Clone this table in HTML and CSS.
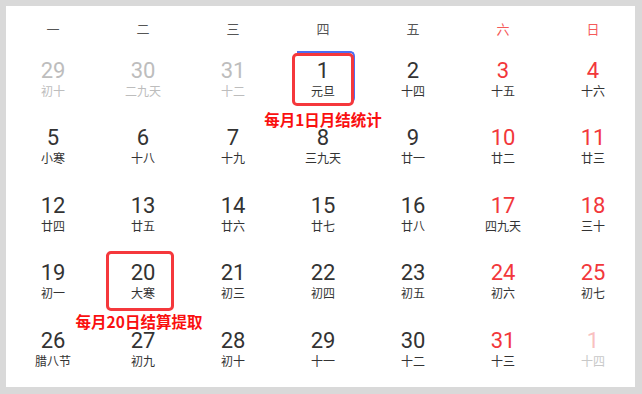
FILE: index.html
```html
<!DOCTYPE html>
<html lang="zh">
<head>
<meta charset="utf-8">
<link rel="stylesheet" href="styles.css">
</head>
<body>
<div class="panel">
  <div class="cal">
    <div class="wk">一</div><div class="wk">二</div><div class="wk">三</div><div class="wk">四</div><div class="wk">五</div><div class="wk we">六</div><div class="wk we">日</div>

    <div class="cell other"><div class="num">29</div><div class="lunar">初十</div></div>
    <div class="cell other"><div class="num">30</div><div class="lunar">二九天</div></div>
    <div class="cell other"><div class="num">31</div><div class="lunar">十二</div></div>
    <div class="cell"><span class="sel"></span><span class="mark mark-1"></span><div class="num">1</div><div class="lunar">元旦</div><span class="note note-1">每月1日月结统计</span></div>
    <div class="cell"><div class="num">2</div><div class="lunar">十四</div></div>
    <div class="cell red"><div class="num">3</div><div class="lunar">十五</div></div>
    <div class="cell red"><div class="num">4</div><div class="lunar">十六</div></div>

    <div class="cell"><div class="num">5</div><div class="lunar">小寒</div></div>
    <div class="cell"><div class="num">6</div><div class="lunar">十八</div></div>
    <div class="cell"><div class="num">7</div><div class="lunar">十九</div></div>
    <div class="cell"><div class="num">8</div><div class="lunar">三九天</div></div>
    <div class="cell"><div class="num">9</div><div class="lunar">廿一</div></div>
    <div class="cell red"><div class="num">10</div><div class="lunar">廿二</div></div>
    <div class="cell red"><div class="num">11</div><div class="lunar">廿三</div></div>

    <div class="cell"><div class="num">12</div><div class="lunar">廿四</div></div>
    <div class="cell"><div class="num">13</div><div class="lunar">廿五</div></div>
    <div class="cell"><div class="num">14</div><div class="lunar">廿六</div></div>
    <div class="cell"><div class="num">15</div><div class="lunar">廿七</div></div>
    <div class="cell"><div class="num">16</div><div class="lunar">廿八</div></div>
    <div class="cell red"><div class="num">17</div><div class="lunar">四九天</div></div>
    <div class="cell red"><div class="num">18</div><div class="lunar">三十</div></div>

    <div class="cell"><div class="num">19</div><div class="lunar">初一</div></div>
    <div class="cell"><span class="mark mark-20"></span><div class="num">20</div><div class="lunar">大寒</div><span class="note note-20">每月20日结算提取</span></div>
    <div class="cell"><div class="num">21</div><div class="lunar">初三</div></div>
    <div class="cell"><div class="num">22</div><div class="lunar">初四</div></div>
    <div class="cell"><div class="num">23</div><div class="lunar">初五</div></div>
    <div class="cell red"><div class="num">24</div><div class="lunar">初六</div></div>
    <div class="cell red"><div class="num">25</div><div class="lunar">初七</div></div>

    <div class="cell"><div class="num">26</div><div class="lunar">腊八节</div></div>
    <div class="cell"><div class="num">27</div><div class="lunar">初九</div></div>
    <div class="cell"><div class="num">28</div><div class="lunar">初十</div></div>
    <div class="cell"><div class="num">29</div><div class="lunar">十一</div></div>
    <div class="cell"><div class="num">30</div><div class="lunar">十二</div></div>
    <div class="cell red"><div class="num">31</div><div class="lunar">十三</div></div>
    <div class="cell next"><div class="num">1</div><div class="lunar">十四</div></div>
  </div>
</div>
</body>
</html>
```
FILE: styles.css
```css
html, body {
  margin: 0;
  padding: 0;
}
body {
  background: #d9d9d9;
  padding: 6px;
  font-family: Roboto, "Noto Sans CJK SC", sans-serif;
}
.panel {
  width: 629px;
  height: 381px;
  background: #fff;
  overflow: hidden;
  padding-left: 2px;
  box-sizing: border-box;
}
.cal {
  display: grid;
  grid-template-columns: repeat(7, 90px);
  grid-template-rows: 44px repeat(5, 1fr);
  height: 381px;
}
.wk {
  display: flex;
  align-items: center;
  justify-content: center;
  font-family: "Noto Sans CJK SC", sans-serif;
  font-size: 13px;
  color: #555;
}
.wk.we {
  color: #f55a5a;
}
.cell {
  position: relative;
  display: flex;
  flex-direction: column;
  align-items: center;
  padding-top: 9px;
}
.num {
  font-size: 22px;
  line-height: 24px;
  color: #333;
}
.lunar {
  font-family: "Noto Sans CJK SC", sans-serif;
  font-size: 12px;
  line-height: 14px;
  margin-top: 1px;
  color: #333;
}
.cell.red .num {
  color: #f2373b;
}
.cell.other .num,
.cell.other .lunar {
  color: #bdbdbd;
}
.cell.next .num {
  color: #f9c0c0;
}
.cell.next .lunar {
  color: #c8c8c8;
}
.sel {
  position: absolute;
  left: 19px;
  top: 1px;
  width: 58px;
  height: 52px;
  box-sizing: border-box;
  border-top: 2px solid #4d6df2;
  border-right: 2px solid #4d6df2;
  border-radius: 0 5px 5px 0;
}
.mark {
  position: absolute;
  box-sizing: border-box;
  border: 3px solid #f5383c;
  border-radius: 5px;
}
.mark-1 {
  left: 14px;
  top: 3px;
  width: 62px;
  height: 53px;
}
.mark-20 {
  left: 8px;
  top: -1px;
  width: 68px;
  height: 60px;
}
.note {
  position: absolute;
  top: 61px;
  left: 50%;
  transform: translateX(-50%);
  white-space: nowrap;
  font-family: "Noto Sans CJK SC", sans-serif;
  font-weight: 700;
  font-size: 15.5px;
  line-height: 16px;
  color: #fa1010;
  z-index: 2;
}
.note-20 {
  margin-left: -4px;
}
```
